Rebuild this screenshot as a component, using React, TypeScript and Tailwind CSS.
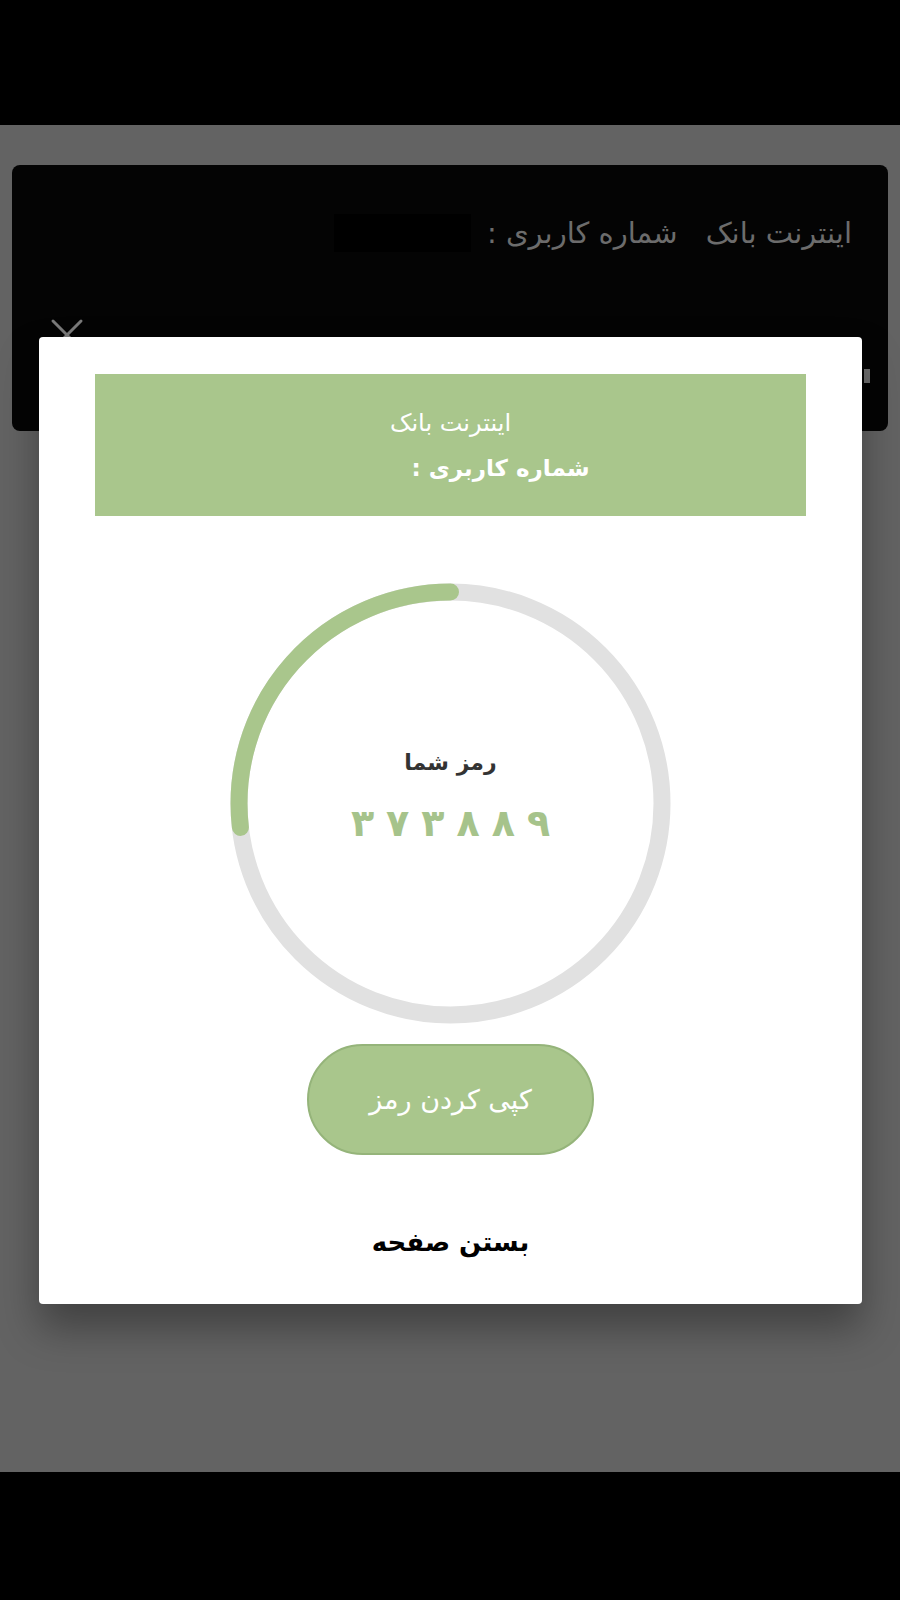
import React from 'react';

const fa = "font-['DejaVu_Sans','Noto_Sans',sans-serif]";

const ProgressRing: React.FC = () => {
  // ring 441px, stroke 17, arc runs counter‑clockwise from top
  return (
    <svg width="441" height="441" viewBox="0 0 441 441" className="absolute inset-0">
      <circle cx="220.5" cy="220.5" r="211.5" fill="none" stroke="#e1e1e1" strokeWidth="17" />
      <path
        d="M 220.5 9 A 211.5 211.5 0 0 0 10.4 244.4"
        fill="none"
        stroke="#a9c68c"
        strokeWidth="17"
        strokeLinecap="round"
      />
    </svg>
  );
};

const code = ['۳', '۷', '۳', '۸', '۸', '۹'];

const App: React.FC = () => {
  return (
    <div className={`w-[900px] h-[1600px] flex flex-col bg-black overflow-hidden ${fa}`} dir="rtl">
      {/* status bar */}
      <div className="h-[125px] bg-black shrink-0"></div>

      {/* dimmed page */}
      <div className="relative flex-1 bg-[#636363] px-[12px] pt-[40px]">
        <div className="h-[266px] rounded-[8px] bg-[#040404] pr-[36px] pt-[49px]">
          <div className="flex items-center gap-[28px] text-[29px] text-[#6c6c6c] leading-none">
            <span>اینترنت بانک</span>
            <div className="flex items-center gap-[16px]">
              <span>شماره کاربری :</span>
              <div className="w-[137px] h-[38px] bg-black"></div>
            </div>
          </div>
        </div>

        {/* close icon peeking from behind the modal */}
        <svg width="34" height="34" viewBox="0 0 34 34" className="absolute left-[50px] top-[193px]">
          <path d="M3 3 L31 31 M31 3 L3 31" stroke="#7a7a7a" strokeWidth="3" strokeLinecap="round" />
        </svg>
        <div className="absolute left-[864px] top-[244px] w-[6px] h-[14px] bg-[#6f6f6f]"></div>

        {/* modal */}
        <div className="absolute left-[39px] top-[212px] w-[823px] h-[967px] bg-white rounded-[4px] shadow-[0_24px_40px_rgba(0,0,0,0.35)] flex flex-col items-center pt-[37px] px-[56px]">
          <div className="w-full h-[142px] bg-[#a9c68c] flex flex-col items-center justify-center text-white">
            <div className="text-[24px] leading-none mb-[22px]">اینترنت بانک</div>
            <div className="flex items-center justify-center">
              <span className="text-[23px] font-bold leading-none">شماره کاربری :</span>
              <span className="w-[100px]"></span>
            </div>
          </div>

          <div className="relative w-[441px] h-[441px] mt-[67px] flex flex-col items-center justify-center pb-[14px]">
            <ProgressRing />
            <div className="relative text-[22px] font-bold text-[#333333] leading-none">رمز شما</div>
            <div className="relative mt-[30px] flex items-center gap-[12px] text-[38px] font-bold text-[#a6c38b] leading-none" dir="ltr">
              {code.map((d, i) => (
                <span key={i}>{d}</span>
              ))}
            </div>
          </div>

          <button className="mt-[20px] w-[287px] h-[111px] rounded-full bg-[#a9c68c] border-2 border-[#95b47a] text-white text-[27px] leading-none">
            کپی کردن رمز
          </button>

          <div className="mt-[74px] text-[26px] font-bold text-black leading-none">بستن صفحه</div>
        </div>
      </div>

      {/* navigation bar */}
      <div className="h-[128px] bg-black shrink-0"></div>
    </div>
  );
};

export default App;
